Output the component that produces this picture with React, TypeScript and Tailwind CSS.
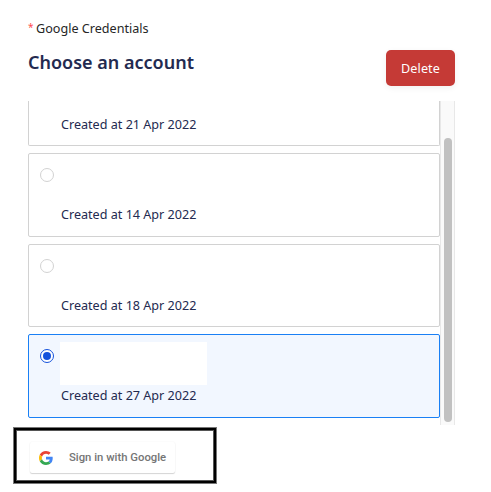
type Account = { date: string; box: string; selected?: boolean };

const accounts: Account[] = [
  { date: "14 Apr 2022", box: "h-[84px] border-[#d2d2d2]" },
  { date: "18 Apr 2022", box: "h-[83px] border-[#d2d2d2]" },
  { date: "27 Apr 2022", box: "h-[84px] border-[#1a80f5] bg-[#f2f7ff]", selected: true },
];

function Radio({ selected }: { selected?: boolean }) {
  return (
    <span
      className={
        selected
          ? "flex h-[14px] w-[14px] items-center justify-center rounded-full border border-[#1452dc] bg-white"
          : "block h-[14px] w-[14px] rounded-full border border-[#d2d2d2] bg-white"
      }
    >
      {selected && <span className="h-2 w-2 rounded-full bg-[#1452dc]" />}
    </span>
  );
}

function AccountCard({ account }: { account: Account }) {
  return (
    <div className={`flex shrink-0 rounded-[2px] border pl-[11px] ${account.box}`}>
      <div className="pt-[14px]">
        <Radio selected={account.selected} />
      </div>
      <div className="ml-[6px] pt-[7px]">
        <div className={account.selected ? "h-[43px] w-[147px] bg-white" : "h-[43px] w-[147px]"} />
        <p className="ml-px mt-px whitespace-nowrap leading-5">Created at {account.date}</p>
      </div>
    </div>
  );
}

function GoogleLogo() {
  return (
    <svg viewBox="0 0 48 48" className="h-[14px] w-[14px]">
      <path fill="#EA4335" d="M24 9.5c3.54 0 6.71 1.22 9.21 3.6l6.85-6.85C35.9 2.38 30.47 0 24 0 14.62 0 6.51 5.38 2.56 13.22l7.98 6.19C12.43 13.72 17.74 9.5 24 9.5z" />
      <path fill="#4285F4" d="M46.98 24.55c0-1.57-.15-3.09-.38-4.55H24v9.02h12.94c-.58 2.96-2.26 5.48-4.78 7.18l7.73 6c4.51-4.18 7.09-10.36 7.09-17.65z" />
      <path fill="#FBBC05" d="M10.53 28.59A14.5 14.5 0 0 1 9.77 24c0-1.6.27-3.14.76-4.59l-7.98-6.19A23.94 23.94 0 0 0 0 24c0 3.88.92 7.54 2.56 10.78l7.97-6.19z" />
      <path fill="#34A853" d="M24 48c6.48 0 11.93-2.13 15.89-5.81l-7.73-6c-2.15 1.45-4.92 2.3-8.16 2.3-6.26 0-11.57-4.22-13.47-9.91l-7.98 6.19C6.51 42.62 14.62 48 24 48z" />
    </svg>
  );
}

export default function App() {
  return (
    <main className="flex h-[492px] w-[491px] flex-col overflow-hidden bg-white font-['Noto_Sans',sans-serif] text-[12.6px] text-[#232a50]">
      <div className="flex h-[50px] shrink-0 pl-7 pt-[19px] leading-5">
        <span className="w-2 shrink-0 text-[10px] leading-[17px] text-[#ff4d4f]">*</span>
        <span className="text-[#262626]">Google Credentials</span>
      </div>

      <div className="flex h-[51px] shrink-0 items-start justify-between pl-7 pr-9">
        <h1 className="text-[18px] font-semibold leading-6">Choose an account</h1>
        <button className="h-9 w-[69px] rounded-[5px] bg-[#c53a36] pt-[2px] text-[12.6px] tracking-[0.1px] text-white shadow-[0_2px_6px_rgba(0,0,0,0.06)]">
          Delete
        </button>
      </div>

      <section className="ml-7 flex h-[324px] w-[427px] shrink-0">
        <div className="flex w-[412px] flex-col gap-[7px]">
          <div className="h-[45px] shrink-0 rounded-b-[2px] border border-t-0 border-[#d2d2d2] pl-8 pt-[14px] leading-5">
            Created at 21 Apr 2022
          </div>
          {accounts.map((account) => (
            <AccountCard key={account.date} account={account} />
          ))}
        </div>
        <div className="w-[15px] border-x border-[#e8e8e8] bg-[#fafafa] pl-[3px] pt-[37px]">
          <div className="h-[284px] w-2 rounded-full bg-[#c1c1c1]" />
        </div>
      </section>

      <div className="ml-[14px] mt-[3px] h-[55px] w-[202px] shrink-0 border-2 border-black pl-[14px] pt-3 shadow-[0_0_0_1px_#777,inset_0_0_0_1px_#555]">
        <button className="flex h-[31px] w-[145px] items-center rounded-[2px] bg-white pl-[9px] shadow-[0_1px_1px_rgba(0,0,0,0.16),0_0_2px_rgba(0,0,0,0.06)]">
          <GoogleLogo />
          <span className="ml-4 whitespace-nowrap pt-px font-['Roboto',sans-serif] text-[11.3px] font-medium text-[#757575]">
            Sign in with Google
          </span>
        </button>
      </div>
    </main>
  );
}
